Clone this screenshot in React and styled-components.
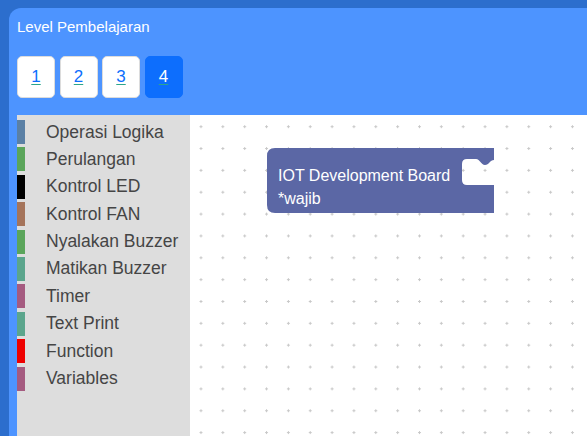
import React from 'react';
import styled, { createGlobalStyle } from 'styled-components';

const GlobalStyle = createGlobalStyle`
	html, body {
		margin: 0;
		padding: 0;
		height: 100%;
		background: #2c6ecd;
		font-family: 'Liberation Sans', Arial, sans-serif;
	}
	#root {
		height: 100%;
	}
`;

const Page = styled.div`
	height: 100vh;
	box-sizing: border-box;
	padding: 8px 0 0 9px;
	overflow: hidden;
	display: flex;
`;

const Panel = styled.div`
	flex: 1;
	display: flex;
	flex-direction: column;
	background: #4d94ff;
	border-top-left-radius: 12px;
	padding-left: 8px;
`;

const Title = styled.div`
	color: #fff;
	font-size: 15px;
	line-height: 17px;
	padding-top: 10px;
`;

const Levels = styled.div`
	display: flex;
	gap: 4.5px;
	margin-top: 21px;
`;

const LevelButton = styled.a`
	width: 38px;
	height: 42px;
	box-sizing: border-box;
	display: flex;
	align-items: center;
	justify-content: center;
	border-radius: 5px;
	border: 1px solid ${(p) => (p.$active ? '#0d6efd' : '#dcdcdc')};
	background: ${(p) => (p.$active ? '#0d6efd' : '#fff')};
	color: ${(p) => (p.$active ? '#fff' : '#0d6efd')};
	font-size: 17px;
	text-decoration: underline;
	text-decoration-color: #2ca58c;
	text-underline-offset: 2px;
	cursor: pointer;
`;

const Main = styled.div`
	flex: 1;
	display: flex;
	margin-top: 17px;
	min-height: 0;
`;

const Toolbox = styled.div`
	width: 173px;
	background: #dddddd;
	padding-top: 5px;
`;

const Category = styled.div`
	height: 24px;
	margin-bottom: 3.4px;
	display: flex;
	align-items: center;
	box-sizing: border-box;
	border-left: 8px solid ${(p) => p.$color};
	padding-left: 21px;
	font-size: 17.5px;
	color: #454545;
	white-space: nowrap;
`;

const Workspace = styled.div`
	flex: 1;
	position: relative;
	background: #fff;
	overflow: hidden;
`;

const Grid = styled.svg`
	position: absolute;
	inset: 0;
	width: 100%;
	height: 100%;
`;

const Block = styled.div`
	position: absolute;
	left: 77px;
	top: 33px;
	width: 227px;
	height: 65px;
	box-sizing: border-box;
	padding: 18.5px 0 0 11px;
	display: flex;
	flex-direction: column;
	gap: 5px;
	color: #fff;
	font-size: 16px;
	line-height: 18px;
`;

const BlockShape = styled.svg`
	position: absolute;
	left: 0;
	top: 0;
	z-index: 0;
`;

const BlockLabel = styled.span`
	position: relative;
	z-index: 1;
`;

const categories = [
	{ name: 'Operasi Logika', color: '#5b80a5' },
	{ name: 'Perulangan', color: '#5ba55b' },
	{ name: 'Kontrol LED', color: '#000000' },
	{ name: 'Kontrol FAN', color: '#a5745b' },
	{ name: 'Nyalakan Buzzer', color: '#5ba55b' },
	{ name: 'Matikan Buzzer', color: '#5ba58c' },
	{ name: 'Timer', color: '#a55b80' },
	{ name: 'Text Print', color: '#5ba58c' },
	{ name: 'Function', color: '#ee0000' },
	{ name: 'Variables', color: '#a55b80' },
];

// block outline with a value-input cut out on the right
const blockPath =
	'M8,0 H227 V12 C223,12 222,17 218,17 C214,17 213,11 209,11 H200 Q195,11 195,16 V32 Q195,37 200,37 H227 V65 H8 Q0,65 0,57 V8 Q0,0 8,0 Z';

export default function App() {
	return (
		<>
			<GlobalStyle />
			<Page>
				<Panel>
					<Title>Level Pembelajaran</Title>
					<Levels>
						{[1, 2, 3, 4].map((n) => (
							<LevelButton key={n} $active={n === 4}>
								{n}
							</LevelButton>
						))}
					</Levels>
					<Main>
						<Toolbox>
							{categories.map((c) => (
								<Category key={c.name} $color={c.color}>
									{c.name}
								</Category>
							))}
						</Toolbox>
						<Workspace>
							<Grid>
								<defs>
									<pattern
										id='dots'
										x='9.5'
										y='10.2'
										width='21.85'
										height='21.85'
										patternUnits='userSpaceOnUse'>
										<path d='M0,1.5 H3 M1.5,0 V3' stroke='#c8c8c8' strokeWidth='1' />
									</pattern>
								</defs>
								<rect width='100%' height='100%' fill='url(#dots)' />
							</Grid>
							<Block>
								<BlockShape width='227' height='65' viewBox='0 0 227 65'>
									<path d={blockPath} fill='#5b67a5' />
								</BlockShape>
								<BlockLabel>IOT Development Board</BlockLabel>
								<BlockLabel>*wajib</BlockLabel>
							</Block>
						</Workspace>
					</Main>
				</Panel>
			</Page>
		</>
	);
}
